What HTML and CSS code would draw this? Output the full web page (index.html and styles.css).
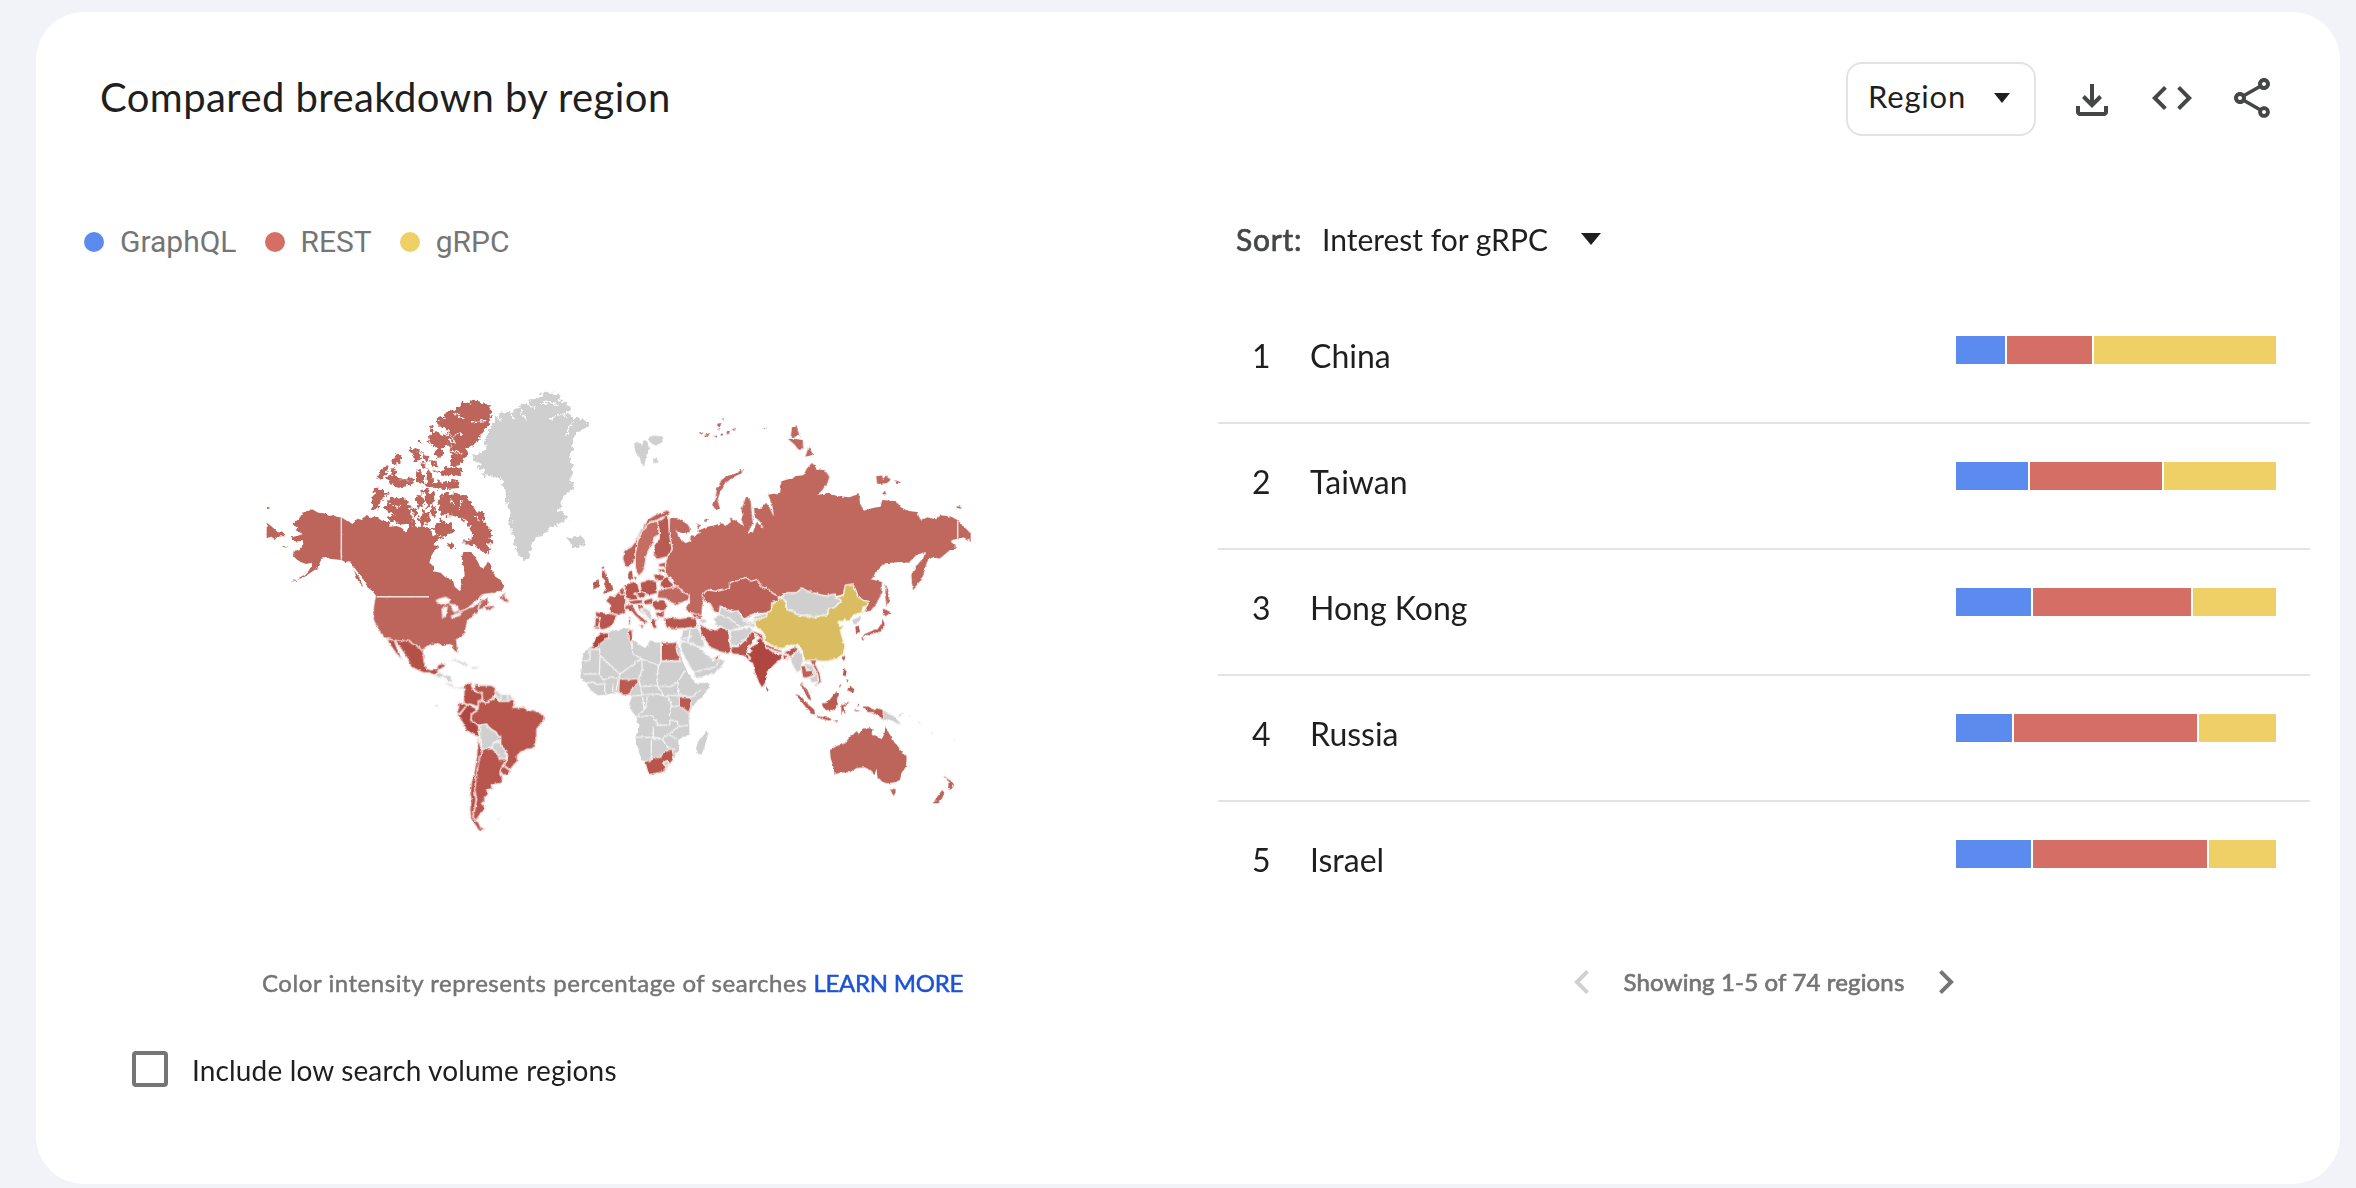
FILE: index.html
```html
<!DOCTYPE html>
<html lang="en">
<head>
<meta charset="utf-8">
<title>Compared breakdown by region</title>
<link rel="stylesheet" href="styles.css">
</head>
<body>
<main class="card">
  <header class="head">
    <h1 class="title">Compared breakdown by region</h1>
    <div class="tools">
      <button class="select"><span class="select-text">Region</span><svg class="caret-sm" viewBox="0 0 16 10"><path d="M0 0h16L8 10z"/></svg></button>
      <svg class="icon icon-download" viewBox="0 -960 960 960"><path d="M480-320 280-520l56-58 104 104v-326h80v326l104-104 56 58-200 200ZM240-160q-33 0-56.5-23.5T160-240v-120h80v120h480v-120h80v120q0 33-23.5 56.5T720-160H240Z"/></svg>
      <svg class="icon" viewBox="0 -960 960 960"><path d="M320-240 80-480l240-240 57 57-184 184 183 183-56 56Zm320 0-57-57 184-184-183-183 56-56 240 240-240 240Z"/></svg>
      <svg class="icon" viewBox="0 0 24 24"><path d="M18 16.08c-.76 0-1.44.3-1.96.77L8.91 12.7c.05-.23.09-.46.09-.7s-.04-.47-.09-.7l7.05-4.11c.54.5 1.25.81 2.04.81 1.66 0 3-1.34 3-3s-1.34-3-3-3-3 1.34-3 3c0 .24.04.47.09.7L8.04 9.81C7.5 9.31 6.79 9 6 9c-1.66 0-3 1.34-3 3s1.34 3 3 3c.79 0 1.5-.31 2.04-.81l7.12 4.16c-.05.21-.08.43-.08.65 0 1.61 1.31 2.92 2.92 2.92s2.92-1.31 2.92-2.92c0-1.61-1.31-2.92-2.92-2.92zM18 4c.55 0 1 .45 1 1s-.45 1-1 1-1-.45-1-1 .45-1 1-1zM6 13c-.55 0-1-.45-1-1s.45-1 1-1 1 .45 1 1-.45 1-1 1zm12 7.02c-.55 0-1-.45-1-1s.45-1 1-1 1 .45 1 1-.45 1-1 1z"/></svg>
    </div>
  </header>
  <div class="body">
    <section class="map-side">
      <ul class="legend">
        <li class="legend-item"><i class="dot blue"></i><span>GraphQL</span></li>
        <li class="legend-item"><i class="dot red"></i><span>REST</span></li>
        <li class="legend-item"><i class="dot yellow"></i><span>gRPC</span></li>
      </ul>
      <svg class="map" viewBox="260 380 720 460">
        <defs>
          <filter id="coast" x="-5%" y="-5%" width="110%" height="110%" color-interpolation-filters="sRGB"><feTurbulence type="fractalNoise" baseFrequency=".25" numOctaves="3" seed="4"/><feDisplacementMap in="SourceGraphic" scale="8" xChannelSelector="R" yChannelSelector="G"/></filter>
          <filter id="shore" x="-5%" y="-5%" width="110%" height="110%" color-interpolation-filters="sRGB"><feTurbulence type="fractalNoise" baseFrequency=".25" numOctaves="2" seed="9"/><feDisplacementMap in="SourceGraphic" scale="3" xChannelSelector="R" yChannelSelector="G"/></filter>
        </defs>
        <!-- Arctic Canada, Greenland, Iceland -->
        <g filter="url(#coast)"><g transform="translate(250 382) scale(.33333)">
          <path class="na bare" d="M730 88L716 76 706 66 690 58 672 56 656 62 644 60 632 68 616 82 600 88 578 94 588 104 560 112 562 128 586 138 600 152 584 156 556 148 548 130 540 140 546 158 534 166 536 180 552 192 562 200 552 212 566 228 578 222 580 200 590 184 604 196 598 214 606 226 598 244 612 252 630 250 636 234 650 226 652 210 656 196 672 186 690 172 680 168 700 150 712 132 720 112Z
          M548 264L576 268 590 258 610 254 634 260 630 282 606 278 580 282ZM556 300L574 294 592 304 606 290 628 296 626 318 590 321 556 320 546 308Z
          M576 338L596 334 620 336 644 338 660 360 670 376 688 388 706 402 702 420 716 436 730 460 718 468 730 484 712 484 720 500 706 514 690 502 672 492 640 484 640 472 664 476 666 456 660 436 640 410 622 404 600 400 574 400 564 370 570 348Z
          M408 364L420 348 446 344 466 352 480 378 484 400 494 420 470 428 446 426 420 416 410 404 438 400 412 388 398 376ZM372 320L390 320 416 334 406 346 392 358 384 382 372 382 364 368 370 346Z
          M590 480L608 484 616 498 596 498ZM494 350L514 336 526 356 510 378ZM526 334L552 332 548 364 530 380ZM506 410L520 384 538 394 540 420 516 432ZM544 440L566 424 574 406 586 428 608 420 610 450 588 458 580 472 560 456ZM484 376L504 380 504 400 490 404ZM474 424L498 422 496 440 476 438ZM544 370L562 380 556 406 542 398Z
          M408 286L430 280 448 292 474 292 478 308 446 318 426 310ZM380 284L400 256 418 250 412 270 392 292ZM424 238L440 216 454 216 450 250 430 246ZM476 196L508 206 516 234 492 236ZM516 210L540 230 526 244ZM502 264L522 276 522 308 500 298ZM530 260L548 282 550 316 530 310ZM476 286L496 294 494 310 476 306ZM510 172L518 184 510 184ZM538 238L562 240 566 256 544 254ZM512 242L532 248 528 262 514 258ZM516 320L538 322 532 336 514 334ZM422 266L438 258 442 278 426 282Z"/>
          <path class="gray bare" d="M668 222L690 214 712 194 700 180 712 158 722 138 736 118 732 104 752 94 774 90 790 92 806 72 824 66 842 72 838 54 866 44 888 32 918 32 936 44 924 58 944 62 960 78 948 94 966 104 984 112 1000 112 1018 124 1006 140 984 150 972 166 970 190 962 214 960 240 970 250 968 276 958 298 972 306 964 328 936 344 928 360 938 372 924 386 950 396 950 412 926 426 900 436 890 456 866 464 850 476 846 494 832 530 820 534 806 520 798 500 794 470 782 440 780 400 772 360 764 320 752 292 736 284 716 278 692 282 706 268 682 262 696 246 676 238ZM948 464L966 470 984 462 1000 464 1006 480 990 494 970 496 960 484Z"/>
          <path class="fjord" d="M900 114L920 98 946 100M806 74L820 100 830 112M836 68L858 82M876 66L900 62 922 68M742 100L756 124M950 156L962 130 974 118M780 90L790 112M562 148L590 160 636 156M596 168L616 186M660 120L706 116M596 204L640 216M610 94L640 110M600 350L612 372M636 356L628 380M420 368L450 374M670 400L690 420"/>
        </g></g>
        <g filter="url(#shore)">
        <!-- North America -->
        <g transform="translate(250 380) scale(.33333)">
          <path class="na bare" d="M274 412L262 411 250 406 238 408 222 400 205 398 186 388 180 392 164 394 156 402 146 418 128 430 134 438 146 444 136 450 158 462 142 468 122 472 134 484 158 484 160 492 148 508 134 512 132 530 142 540 158 548 168 552 186 548 184 560 176 572 164 584 150 592 122 608 164 590 190 572 206 556 212 542 224 528 236 536 252 538 274 540Z"/>
          <path class="na bare" d="M274 412L290 422 308 432 322 416 336 420 350 404 362 414 378 410 396 422 416 424 420 440 440 438 456 444 468 458 476 440 500 440 530 440 544 450 548 470 560 462 572 470 548 494 566 500 548 516 538 548 550 558 550 574 572 578 586 592 608 598 614 620 630 634 634 614 632 598 644 588 642 562 636 548 636 530 640 516 664 516 672 528 684 546 690 560 702 566 714 544 722 560 728 576 736 590 752 600 762 620 756 630 730 640 704 642 684 660 664 678 644 690 628 696 606 710 560 690 536 650 380 650 368 634 352 622 342 602 336 590 320 572 308 556 298 544 286 546 274 540Z"/>
          <path class="na bare" d="M50 428L66 440 82 456 98 458 104 468 82 470 74 480 62 472 50 474ZM50 380L62 384 52 388ZM96 496L112 500 108 504ZM186 572L204 560 206 568ZM692 656L706 660 700 676 680 684ZM312 570L326 590 340 620 322 600Z"/>
        </g>
        <g transform="translate(360 570) scale(.33333)">
          <path class="na bare" d="M48 80L206 80 230 90 250 96 270 110 284 132 312 120 336 112 350 104 368 90 382 84 384 100 372 112 354 120 346 132 330 142 322 152 318 166 314 182 316 190 302 200 288 208 290 228 292 248 282 240 278 228 272 222 256 224 248 226 236 220 214 222 200 228 190 236 190 248 178 230 164 226 158 220 144 210 120 214 98 208 80 204 64 192 52 170 42 150 40 128 44 96Z"/>
          <path class="na" d="M370 110L400 106 404 112 380 122ZM418 82L436 66 434 80 448 92 440 98 424 88Z"/>
          <path class="line" d="M284 132L312 120 328 112 350 92 368 74 400 70M354 120L360 96 376 86"/>
          <path class="sea" d="M228 92L244 84 258 82 270 90 262 100 240 102ZM254 108L262 110 256 140 248 142 246 118ZM268 102L290 106 296 120 282 126 276 112ZM274 138L300 128 302 134 280 144Z"/>
          <path class="mx" d="M80 206L98 210 120 214 144 210 158 222 178 232 190 248 192 276 200 296 214 300 230 298 234 284 254 280 250 292 238 300 224 316 208 308 190 308 172 300 152 290 148 274 132 250 118 230 108 218 104 214 112 236 122 256 124 268 108 250 98 236 88 220Z"/>
          <path class="gray" d="M224 316L238 304 244 312 272 318 276 340 262 332 250 320 236 322ZM278 348L290 354 308 350 312 356 296 358 284 356ZM268 272L286 267 306 275 326 284 318 288 300 280 280 272ZM334 290L354 292 352 297 336 297ZM412 748l8-3-4 6Z"/>
          <path class="mx" d="M258 340L278 346 272 350ZM228 404h4v4h-4Z"/>
          <!-- South America -->
          <path class="mx" d="M312 352L324 340 336 336 334 346 342 364 366 370 366 388 356 392 354 410 330 402 320 404 310 396 312 372Z"/>
          <path class="br" d="M344 340L352 346 372 346 394 346 408 356 402 374 396 386 380 396 368 392 366 370 344 362Z"/>
          <path class="gray" d="M408 358L424 372 450 372 458 386 444 394 420 394 412 380 404 374Z"/>
          <path class="line" d="M424 372L422 392M442 372L444 394"/>
          <path class="mx" d="M296 398L310 400 322 404 308 420 298 432 290 428 296 412Z"/>
          <path class="in" d="M322 404L346 414 352 420 334 432 332 450 346 458 356 468 356 502 340 494 320 482 308 458 294 438 290 430 300 434 310 420Z"/>
          <path class="br" d="M356 394L368 394 378 400 398 388 410 380 418 394 444 394 458 386 466 400 458 412 478 412 496 412 502 422 520 420 538 428 552 436 552 448 540 464 530 478 530 500 524 526 516 536 498 538 482 546 472 556 472 574 462 584 450 600 440 592 430 584 444 566 440 544 424 530 420 512 410 490 396 480 380 464 358 466 334 452 334 434 354 420Z"/>
          <path class="gray" d="M358 466L380 462 386 474 408 486 414 498 422 500 422 514 402 516 396 532 378 536 368 538 360 508 358 490Z"/>
          <path class="gray" d="M400 518L420 516 424 530 440 544 438 566 418 566 416 552 396 534Z"/>
          <path class="br" d="M368 538L396 536 414 552 418 568 440 566 428 586 420 604 420 614 428 624 422 640 394 644 396 656 380 660 384 674 374 680 374 694 364 700 376 712 364 728 354 742 348 752 338 740 344 720 350 688 344 660 346 636 352 600 356 570 364 548Z"/>
          <path class="br" d="M428 586L450 602 444 614 426 614 420 606Z"/>
          <path class="mx" d="M354 506L362 530 366 544 358 566 352 598 346 636 344 664 348 690 342 724 338 740 348 752 356 758 362 772 376 778 360 782 346 766 332 744 330 714 334 690 330 672 334 640 344 600 350 560Z"/>
        </g>
        <!-- Russia and Kazakhstan -->
        <g transform="translate(620 400) scale(.33333)">
          <path class="ru bare" d="M150 352L176 356 204 374 210 390 202 402 182 398 166 390 172 400 176 412 190 424 196 430 210 424 212 406 228 408 240 400 234 392 262 380 284 376 304 370 320 376 332 366 330 352 350 364 372 380 364 358 370 340 364 330 378 290 392 300 394 330 398 370 384 398 398 398 410 366 430 386 424 366 404 352 402 324 424 324 438 308 448 322 462 350 456 312 444 284 480 278 484 244 510 236 528 228 550 226 560 206 576 188 590 206 616 212 628 230 622 250 604 274 590 286 626 278 650 288 688 292 716 282 722 314 732 332 758 324 780 320 786 300 830 304 840 320 862 332 890 336 902 360 920 352 948 358 962 346 994 350 1012 360 1036 384 1052 400 1052 424 1030 412 1006 418 988 424 1006 434 1008 450 990 450 966 470 956 476 942 470 926 478 920 488 912 520 904 540 890 554 880 572 876 552 874 524 882 510 896 490 914 468 918 456 890 464 866 488 838 486 796 490 774 510 752 538 786 546 784 580 770 610 752 632 734 636 740 620 748 604 730 600 714 590 708 570 698 556 676 554 670 582 646 590 612 586 560 576 546 564 530 578 502 578 480 590 464 584 446 568 424 560 412 538 392 544 378 532 352 542 328 548 328 566 290 574 262 570 246 584 250 604 246 620 244 648 226 648 200 632 198 620 210 606 208 586 186 574 168 562 160 540 138 522 134 510 138 484 158 448 148 400Z"/>
          <path class="ru bare" d="M372 206L364 220 340 232 316 250 300 278 292 300 300 326 288 330 276 314 286 300 290 270 304 240 322 228 350 218ZM516 82L530 76 538 108 512 112ZM504 116L522 116 548 120 550 148 536 150 524 134ZM556 170L566 140 580 164ZM768 230L786 226 790 240 800 226 812 240 800 250 772 252ZM822 240L844 248 830 250ZM786 282L794 272 802 284ZM1008 324L1018 318 1026 326ZM254 356L264 358 258 364ZM228 370L242 376 234 386ZM796 548L804 570 808 600 800 622 796 590ZM236 96L250 98 244 104ZM252 106L270 98 262 112ZM290 72L304 68 300 82ZM316 96L330 90 326 106ZM300 98L312 104 304 108ZM334 90L348 84 344 92ZM306 56L314 54 308 60ZM432 84h6v3h-6ZM290 86L300 84 298 92ZM280 110L290 106 288 114Z"/>
          <path class="kz" d="M246 584L262 570 290 574 328 566 328 548 352 542 378 532 392 544 412 538 424 560 446 568 464 584 476 588 472 604 456 608 454 630 440 640 404 640 370 658 354 640 330 632 300 618 298 640 284 636 270 610 252 604Z"/>
        </g>
        <!-- Europe, Africa, Middle East -->
        <g transform="translate(570 400) scale(.33333)">
          <path class="gray bare" d="M192 130L206 124 214 140 222 120 232 124 238 150 230 164 222 200 214 190 208 170 198 160ZM232 114L250 106 276 110 278 128 256 136 240 126ZM248 180L260 172 266 186 254 190Z"/>
          <path class="kz" d="M302 336L290 330 270 340 254 346 236 356 226 372 214 388 206 404 196 424 184 440 162 454 158 476 166 500 178 500 192 486 196 456 204 416 220 390 240 366 262 360 276 352 292 350Z"/>
          <path class="se" d="M220 388L244 364 262 364 268 384 266 404 252 412 248 432 236 450 228 468 226 488 220 514 206 528 200 516 196 500 196 460 204 420Z"/>
          <path class="eu" d="M262 362L276 358 290 346 296 360 298 400 306 448 292 470 262 478 250 462 252 440 268 416 268 392Z"/>
          <path class="eu bare" d="M176 516L186 510 188 528 182 542 174 534ZM96 512L108 516 112 532 118 548 128 560 130 572 114 576 98 580 108 566 102 552 106 542 96 532ZM70 546L86 538 88 560 70 568ZM94 498L104 502 98 508ZM192 530L200 532 196 540Z"/>
          <path class="eu" d="M118 590L136 586 150 570 164 582 168 600 164 620 168 636 156 642 144 644 120 640 122 616 106 602Z"/>
          <path class="br" d="M76 636L120 640 142 646 134 662 128 676 110 686 96 690 88 682 88 654 78 650Z"/>
          <path class="br" d="M76 652L90 654 86 684 74 684Z"/>
          <path class="br" d="M164 556L182 546 202 548 208 570 202 598 180 602 164 590Z"/>
          <path class="br" d="M148 572L164 560 162 584 152 584Z"/>
          <path class="br" d="M210 548L236 538 260 546 262 580 240 586 214 576Z"/>
          <path class="br" d="M194 582L216 576 232 586 214 594Z"/>
          <path class="br" d="M168 604L196 600 214 598 220 610 188 614Z"/>
          <path class="br" d="M222 600L248 594 250 612 228 614Z"/>
          <path class="eu" d="M164 616L188 612 190 622 204 642 220 654 234 664 228 672 214 664 196 648 180 630 166 628ZM206 674L222 674 218 684ZM176 654L182 654 182 670 176 670Z"/>
          <path class="gray" d="M214 622L236 626 246 644 244 666 236 656 220 640Z"/>
          <path class="eu" d="M200 614L220 616 222 624 210 626 220 642 206 630Z"/>
          <path class="br" d="M250 602L280 598 292 616 284 632 256 630 246 616Z"/>
          <path class="br" d="M256 638L284 632 282 652 260 652Z"/>
          <path class="br" d="M244 660L262 656 256 668 262 684 250 686 244 672Z"/>
          <path class="br" d="M272 540L290 526 304 544 312 560 294 566 270 562Z"/>
          <path class="br" d="M250 524L266 520 284 530 274 544 256 540Z"/>
          <path class="br" d="M262 508L286 506 286 518 270 516Z"/>
          <path class="br" d="M264 492L288 486 286 500 268 500Z"/>
          <path class="ru" d="M264 572L296 564 324 560 336 574 358 586 356 600 330 610 322 616 300 606 288 596 262 594Z"/>
          <path class="br" d="M280 658L300 652 330 656 354 652 378 656 384 680 350 684 320 686 290 684Z"/>
          <path class="br" d="M362 638L396 648 394 656 372 652Z"/>
          <path class="gray" d="M384 660L400 656 412 664 400 672Z"/>
          <path class="gray bare" d="M90 696L112 696 140 690 166 686 180 684 186 700 184 716 202 730 226 744 240 722 254 724 290 732 324 728 330 760 344 800 352 816 376 850 420 848 416 864 396 890 368 918 358 940 358 972 358 1004 340 1010 324 1022 328 1050 318 1060 312 1078 300 1092 280 1116 254 1120 236 1124 226 1088 214 1078 202 1040 196 1012 206 978 200 952 184 932 180 908 186 888 170 884 148 880 140 876 110 884 84 886 66 874 50 852 30 834 36 800 34 780 46 752 66 744 74 722Z"/>
          <path class="gray bare" d="M410 990L414 1004 404 1040 396 1060 384 1062 378 1044 384 1022 398 1010Z"/>
          <path class="line" d="M60 748H88L92 768 150 822 214 776 190 762 180 714M60 752V782H36M90 768L88 822H40M214 776L266 796 272 788V728M188 744L184 720M272 784H334M266 796L260 836 264 858 300 860 324 846 344 812M216 776V810L206 838M150 822L148 836M206 838L212 860 240 856 262 858M88 822L100 840 124 830 148 836M82 854L104 850M104 884V854M128 880V850M138 874L144 840M50 852L66 846 82 854M212 864L216 884 262 882 280 888 326 886M186 888L216 886M218 890L222 930 200 948M222 950H200M262 858L282 886M324 848L326 884 364 892 392 870M296 892L304 916 298 938 300 974 262 976 250 948 222 948M250 1012H196M250 980V1012L276 1016 300 1000 324 980 322 964 300 960M354 976L322 980M328 918L304 920M358 940L358 972M244 1020V1080M250 1018L276 1016 294 1044M300 1006L322 1018M294 1044L312 1048M232 890L226 930"/>
          <path class="in" d="M92 700L114 698 116 712 90 732 74 746 56 746 66 740 76 714Z"/>
          <path class="br" d="M176 690L186 690 188 716 182 728 174 712Z"/>
          <path class="eu" d="M274 728L300 728 322 726 318 744 330 782 274 782Z"/>
          <path class="eu" d="M148 836L176 838 204 836 204 850 190 860 178 884 160 886 146 876Z"/>
          <path class="eu" d="M328 888L340 892 362 894 362 922 356 938 328 916Z"/>
          <path class="br" d="M224 1084L244 1080 246 1070 264 1076 284 1056 306 1046 312 1076 300 1092 280 1116 236 1124Z"/>
          <path class="gray" d="M278 1090L290 1082 298 1090 288 1100Z"/>
          <path class="gray" d="M338 690L360 686 384 684 402 724 404 740 388 740 350 724 332 722Z"/>
          <path class="line" d="M360 686L358 712 338 716M350 724L366 706"/>
          <path class="gray" d="M330 726L350 726 390 744 410 762 430 780 448 776 466 782 452 804 430 822 400 830 380 836 370 818 350 782 334 752Z"/>
          <path class="line" d="M370 818L410 806 440 800 444 780"/>
          <path class="br" d="M430 776L448 764 444 780Z"/>
          <path class="br" d="M388 670L402 680 414 686 436 690 452 682 474 684 478 708 482 750 480 762 452 756 440 750 424 744 408 724 394 704Z"/>
          <path class="gray" d="M430 656L446 644 454 620 482 636 504 632 520 656 548 666 550 650 586 640 606 646 570 672 548 680 528 678 500 686 478 694 452 680 438 676Z"/>
          <path class="line" d="M446 644L478 654 510 680M520 660L536 672 560 668M546 656L580 660"/>
          <path class="gray" d="M480 692L508 688 540 682 548 688 540 706 520 722 500 738 482 736Z"/>
          <path class="br" d="M484 740L504 740 530 716 548 690 556 704 548 730 530 748 536 766 540 784 524 770 510 764 488 762 482 754Z"/>
        </g>
        <!-- East and South Asia, Oceania -->
        <g transform="translate(740 560) scale(.33333)">
          <path class="in" d="M34 210L54 218 70 226 74 240 60 232 46 224Z"/>
          <path class="in" d="M50 240L62 232 74 248 78 262 100 276 124 284 126 296 106 312 80 338 76 370 66 384 56 368 44 338 38 310 28 304 32 294 20 280 36 272 30 262 52 250Z"/>
          <path class="mx" d="M78 252L108 266 124 272 122 278 96 270 80 262Z"/>
          <path class="mx" d="M130 278L164 260 176 266 160 284 148 292 146 284Z"/>
          <path class="kz" d="M128 282L142 286 142 302 130 298Z"/>
          <path class="cn" d="M44 184L60 176 80 170 82 156 96 150 96 128 112 126 118 112 136 122 138 148 164 156 170 164 224 172 262 164 264 150 286 140 304 122 288 112 310 106 316 76 338 72 348 92 354 110 370 122 388 124 380 138 368 142 370 158 342 164 330 180 322 184 316 178 294 188 300 200 314 194 302 214 308 236 316 260 308 284 292 296 264 304 240 304 220 300 196 302 190 292 186 270 176 256 150 256 126 266 102 260 76 244 76 228 66 214 48 200ZM246 316L254 318 248 324Z"/>
          <path class="gray" d="M122 112L142 98 170 98 186 84 204 94 240 104 256 108 286 102 288 112 304 122 286 140 264 150 262 164 224 170 172 164 166 156 140 148 138 122Z"/>
          <path class="gray bare" d="M336 182L364 166 360 182 348 194 340 190ZM430 450L450 462 464 472 484 492 462 486 446 478 430 482ZM474 466L492 458 482 468Z"/>
          <path class="eu bare" d="M346 200L356 196 360 216 348 222ZM312 286L316 292 312 304 308 296Z"/>
          <path class="kz bare" d="M428 174L434 196 424 214 400 220 378 226 366 232 374 222 398 212 414 206 426 188ZM364 232L374 234 368 242ZM430 146L452 156 438 168 428 164Z"/>
          <path class="gray" d="M160 284L178 270 188 290 190 304 182 314 184 330 170 338 160 320 150 300ZM194 308L216 316 236 350 230 366 214 368 208 354 224 348 216 330 200 328Z"/>
          <path class="kz" d="M182 318L196 316 200 332 220 330 222 346 200 354 188 352ZM208 300L232 300 226 312 240 340 244 366 226 378 236 360 232 340 218 316Z"/>
          <path class="kz bare" d="M186 360L188 376 208 400 214 422 204 416 194 396 184 380ZM78 378L86 390 80 396Z"/>
          <path class="eu bare" d="M166 402L182 408 204 432 222 448 226 466 214 462 196 440ZM226 468L260 472 276 478 268 482 236 474ZM246 430L262 428 278 408 290 394 298 404 290 416 294 432 284 450 258 450 248 440ZM304 436L324 430 310 442 318 460 308 452 304 466ZM280 480L296 482 290 485ZM312 324L320 330 318 348 308 346ZM330 378L344 388 338 398 322 390ZM296 380L306 370 300 382ZM318 358L326 360 322 368ZM354 426L358 436 352 438ZM340 450L362 452 350 455ZM366 440L386 440 400 450 414 444 428 450 428 478 412 466 400 456 384 456ZM310 428L328 426 324 431Z"/>
          <path class="na bare" d="M270 570L290 558 314 550 324 538 336 524 346 516 360 522 368 506 390 504 402 508 394 520 412 530 426 538 434 518 436 500 442 512 450 522 456 540 472 556 484 574 500 592 498 620 484 640 480 660 460 668 440 670 426 664 412 650 410 626 404 642 392 630 374 622 350 624 330 636 304 638 284 642 280 618 272 594ZM450 688L468 690 462 708ZM612 646L624 658 644 668 634 688 624 688 626 668ZM606 690L614 698 606 716 594 730 578 730 588 716Z"/>
          <path class="gray bare" d="M508 466l6 4-4 1ZM534 484l10 6-6-1ZM574 518h4v3h-4ZM640 538l8-2-6 4Z"/>
        </g>
        </g>
        <!-- Straight land borders -->
        <path class="border" d="M341.3 517V559.5M377 596.7H429M957.7 520.5V540"/>
      </svg>
      <p class="note"><span class="note-text">Color intensity represents percentage of searches</span> <a class="learn">LEARN MORE</a></p>
      <label class="check"><i class="box"></i><span>Include low search volume regions</span></label>
    </section>
    <section class="list-side">
      <div class="sort"><span class="sort-label">Sort:</span><span class="sort-value">Interest for gRPC</span><svg class="caret" viewBox="0 0 20 12"><path d="M0 0h20L10 12z"/></svg></div>
      <ol class="rows">
        <li class="row"><span class="rank">1</span><span class="name">China</span><div class="bar"><i class="blue" style="width:49px"></i><i class="red" style="width:85px"></i><i class="yellow"></i></div></li>
        <li class="row"><span class="rank">2</span><span class="name">Taiwan</span><div class="bar"><i class="blue" style="width:72px"></i><i class="red" style="width:132px"></i><i class="yellow"></i></div></li>
        <li class="row"><span class="rank">3</span><span class="name">Hong Kong</span><div class="bar"><i class="blue" style="width:75px"></i><i class="red" style="width:158px"></i><i class="yellow"></i></div></li>
        <li class="row"><span class="rank">4</span><span class="name">Russia</span><div class="bar"><i class="blue" style="width:56px"></i><i class="red" style="width:183px"></i><i class="yellow"></i></div></li>
        <li class="row"><span class="rank">5</span><span class="name">Israel</span><div class="bar"><i class="blue" style="width:75px"></i><i class="red" style="width:174px"></i><i class="yellow"></i></div></li>
      </ol>
      <nav class="pager">
        <svg class="chev off" viewBox="8 6 7.41 12"><path d="M15.41 7.41L14 6l-6 6 6 6 1.41-1.41L10.83 12z"/></svg>
        <span class="pager-text">Showing 1-5 of 74 regions</span>
        <svg class="chev" viewBox="8.59 6 7.41 12"><path d="M10 6L8.59 7.41 13.17 12l-4.58 4.59L10 18l6-6z"/></svg>
      </nav>
    </section>
  </div>
</main>
</body>
</html>
```
FILE: styles.css
```css
* { box-sizing: border-box; }
body { margin: 0; height: 1188px; padding: 12px 16px 4px 36px; background: #f2f3f8; color: #1f1f1f; font-family: Lato, "Open Sans", sans-serif; overflow: hidden; }
.card { height: 1172px; background: #fff; border-radius: 48px; padding: 50px 30px 0 48px; }
.head { display: flex; justify-content: space-between; height: 74px; padding: 0 34px 0 16px; }
.title { margin: 0; font-size: 40px; font-weight: 400; line-height: 70px; letter-spacing: .42px; white-space: nowrap; }
.tools { display: flex; align-items: center; gap: 32px; }
.select { display: flex; align-items: center; justify-content: space-between; width: 190px; height: 74px; padding: 0 24px 5px 20px; background: #fff; border: 2px solid #e3e3e3; border-radius: 16px; font: 400 31px/65px Lato, sans-serif; letter-spacing: .8px; color: #1f1f1f; }
.caret-sm { width: 16px; height: 10px; margin-top: 3px; fill: #1f1f1f; }
.icon { width: 48px; height: 48px; margin-bottom: 2px; fill: #444746; }
.icon-download { margin: 2px 0 0; }
.body { display: flex; }
.map-side { width: 1134px; }
.legend { display: flex; gap: 28px; margin: 0; padding: 84px 0 0; list-style: none; font-family: Roboto, sans-serif; font-size: 30px; line-height: 44px; color: #757575; }
.legend-item { display: flex; align-items: center; gap: 16px; }
.dot { width: 20px; height: 20px; border-radius: 50%; }
.blue { background: #5c8bf0; }
.red { background: #d56f65; }
.yellow { background: #efd067; }
.map { display: block; width: 720px; height: 460px; margin: 116px 0 0 176px; }
.map path { stroke: #f3dfdd; stroke-width: 4; stroke-linejoin: round; }
.map .gray { fill: #cfcfcf; stroke: #f4f4f4; }
.map .na { fill: #bd645b; }
.map .mx { fill: #b55047; }
.map .br { fill: #b8554c; }
.map .in { fill: #af4740; }
.map .ru { fill: #c0675e; }
.map .kz { fill: #bd6058; }
.map .se { fill: #c66d63; }
.map .eu { fill: #ba5b52; }
.map .cn { fill: #dabd60; stroke: #f8f2e0; }
.map .sea { fill: #fff; }
.map .bare { stroke: none; }
.map .line { fill: none; stroke: #f4f4f4; }
.map .fjord { fill: none; stroke: #fff; }
.map .border { fill: none; stroke-width: 1.5; }
.note { margin: 123px 0 0 178px; font-size: 24px; line-height: 40px; color: #757575; white-space: nowrap; -webkit-text-stroke: .5px currentColor; }
.note-text { letter-spacing: .56px; }
.learn { color: #1d53d3; letter-spacing: -.25px; }
.check { display: flex; align-items: center; gap: 24px; margin: 42px 0 0 48px; font-size: 28px; line-height: 44px; letter-spacing: .15px; }
.check span { padding-top: 3px; }
.box { width: 36px; height: 36px; border: 4px solid #757575; border-radius: 4px; }
.list-side { width: 1092px; }
.sort { display: flex; align-items: center; height: 40px; margin-top: 83px; padding-left: 18px; font-size: 30px; }
.sort-label { width: 64px; color: #444746; letter-spacing: .8px; margin-right: 22px; -webkit-text-stroke: .7px currentColor; }
.caret { width: 20px; height: 12px; margin-left: 33px; fill: #1f1f1f; }
.rows { margin: 39px 0 0; padding: 0; list-style: none; }
.row { display: flex; align-items: center; height: 126px; padding: 0 34px 10px; border-bottom: 2px solid #e3e3e3; font-size: 32px; }
.row:last-child { border-color: transparent; }
.rank { width: 58px; }
.name { flex: 1; }
.bar { display: flex; gap: 2px; width: 320px; height: 28px; margin-bottom: 10px; }
.bar .yellow { flex: 1; }
.pager { display: flex; align-items: center; justify-content: center; gap: 35px; margin-top: 39px; font-size: 24px; color: #757575; }
.pager-text { letter-spacing: .15px; -webkit-text-stroke: .7px currentColor; }
.chev { width: 15px; height: 24px; fill: #757575; }
.off { fill: #d0d0d0; }
```
